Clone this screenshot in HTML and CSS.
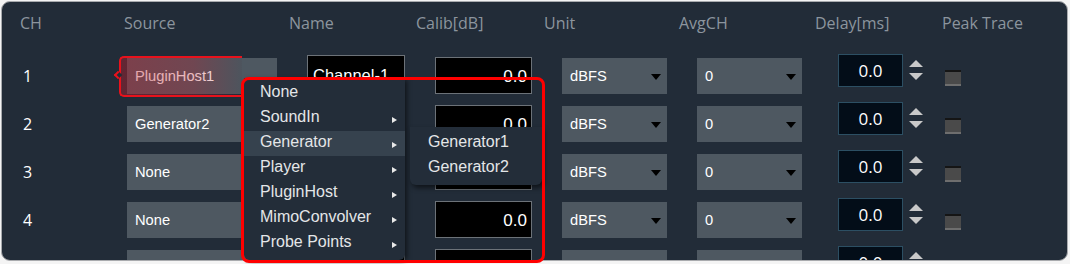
FILE: index.html
```html
<!DOCTYPE html>
<html>
<head>
<meta charset="utf-8">
<link rel="stylesheet" href="styles.css">
</head>
<body>
<div class="stage">
  <div class="panel">
    <div class="grid head">
      <div>CH</div><div>Source</div><div>Name</div><div>Calib[dB]</div><div>Unit</div><div>AvgCH</div><div>Delay[ms]</div><div>Peak Trace</div>
    </div>

    <div class="grid row">
      <div class="ch">1</div>
      <div class="combo src">PluginHost1</div>
      <div class="name">Channel-1</div>
      <div class="calib">0.0</div>
      <div class="combo sel">dBFS<span class="caret"></span></div>
      <div class="combo sel">0<span class="caret"></span></div>
      <div class="delay"><div class="dbox">0.0</div><div class="spin"><span class="up"></span><span class="down"></span></div></div>
      <div class="chk"></div>
    </div>

    <div class="grid row">
      <div class="ch">2</div>
      <div class="combo src">Generator2</div>
      <div class="name">Channel-2</div>
      <div class="calib">0.0</div>
      <div class="combo sel">dBFS<span class="caret"></span></div>
      <div class="combo sel">0<span class="caret"></span></div>
      <div class="delay"><div class="dbox">0.0</div><div class="spin"><span class="up"></span><span class="down"></span></div></div>
      <div class="chk"></div>
    </div>

    <div class="grid row">
      <div class="ch">3</div>
      <div class="combo src">None</div>
      <div class="name">Channel-3</div>
      <div class="calib">0.0</div>
      <div class="combo sel">dBFS<span class="caret"></span></div>
      <div class="combo sel">0<span class="caret"></span></div>
      <div class="delay"><div class="dbox">0.0</div><div class="spin"><span class="up"></span><span class="down"></span></div></div>
      <div class="chk"></div>
    </div>

    <div class="grid row">
      <div class="ch">4</div>
      <div class="combo src">None</div>
      <div class="name">Channel-4</div>
      <div class="calib">0.0</div>
      <div class="combo sel">dBFS<span class="caret"></span></div>
      <div class="combo sel">0<span class="caret"></span></div>
      <div class="delay"><div class="dbox">0.0</div><div class="spin"><span class="up"></span><span class="down"></span></div></div>
      <div class="chk"></div>
    </div>

    <div class="grid row">
      <div class="ch">5</div>
      <div class="combo src">None</div>
      <div class="name">Channel-5</div>
      <div class="calib">0.0</div>
      <div class="combo sel">dBFS<span class="caret"></span></div>
      <div class="combo sel">0<span class="caret"></span></div>
      <div class="delay"><div class="dbox">0.0</div><div class="spin"><span class="up"></span><span class="down"></span></div></div>
      <div class="chk"></div>
    </div>
  </div>

  <div class="callout"></div>

  <div class="menu">
    <div class="item">None</div>
    <div class="item">SoundIn<span class="arrow"></span></div>
    <div class="item active">Generator<span class="arrow"></span></div>
    <div class="item">Player<span class="arrow"></span></div>
    <div class="item">PluginHost<span class="arrow"></span></div>
    <div class="item">MimoConvolver<span class="arrow"></span></div>
    <div class="item">Probe Points<span class="arrow"></span></div>
  </div>
  <div class="submenu">
    <div class="item">Generator1</div>
    <div class="item">Generator2</div>
  </div>
  <div class="frame"></div>
</div>
</body>
</html>
```

FILE: styles.css
```css
html, body {
  margin: 0;
  padding: 0;
  background: #f4f4f4;
}

.stage {
  position: relative;
  width: 1070px;
  height: 264px;
  overflow: hidden;
}

.panel {
  box-sizing: border-box;
  margin: 1px 0 0 1px;
  width: 1067px;
  height: 260px;
  border: 1px solid #a9abae;
  border-radius: 9px;
  background: #222c38;
  overflow: hidden;
  padding-left: 18px;
}

.grid {
  display: grid;
  grid-template-columns: 104px 165px 127px 128px 135px 136px 127px 1fr;
}

.head {
  height: 50px;
  padding-top: 10px;
  box-sizing: border-box;
  font-family: "Open Sans", "Noto Sans", sans-serif;
  font-size: 16px;
  line-height: 22px;
  color: #8c959e;
}

.row {
  height: 48px;
  align-items: start;
  font-family: "Liberation Sans", Arial, sans-serif;
  color: #ffffff;
}

.ch {
  padding-left: 3px;
  height: 48px;
  line-height: 48px;
  font-family: "Open Sans", "Noto Sans", sans-serif;
  font-size: 16px;
}

.combo {
  box-sizing: border-box;
  margin-top: 6px;
  height: 36px;
  background: #4e5861;
  display: flex;
  align-items: center;
  padding-left: 8px;
  font-size: 14.7px;
}

.src {
  margin-left: 3px;
  width: 150px;
}

.sel {
  margin-left: 18px;
  width: 105px;
  justify-content: space-between;
  padding-right: 6px;
}

.caret {
  width: 0;
  height: 0;
  border-left: 5px solid transparent;
  border-right: 5px solid transparent;
  border-top: 6px solid #000000;
  margin-top: 1px;
}

.name {
  box-sizing: border-box;
  margin: 3px 0 0 18px;
  width: 98px;
  height: 36px;
  background: #000000;
  border: 1px solid #6c7278;
  padding-left: 5px;
  font-size: 16.5px;
  line-height: 38px;
  white-space: nowrap;
  overflow: hidden;
}

.calib {
  box-sizing: border-box;
  margin: 5px 0 0 19px;
  width: 97px;
  height: 37px;
  background: #000000;
  border: 1px solid #6c7278;
  padding-right: 4px;
  text-align: right;
  font-size: 17px;
  line-height: 37px;
}

.delay {
  display: flex;
  margin: 2px 0 0 23px;
}

.dbox {
  box-sizing: border-box;
  width: 65px;
  height: 33px;
  background: #030d18;
  border: 1px solid #2c4f63;
  text-align: center;
  font-family: "Open Sans", "Noto Sans", sans-serif;
  font-size: 17px;
  line-height: 31px;
}

.spin {
  display: flex;
  flex-direction: column;
  margin-left: 6px;
  padding-top: 6px;
  gap: 6px;
}

.up, .down {
  display: block;
  width: 0;
  height: 0;
  border-left: 7px solid transparent;
  border-right: 7px solid transparent;
}

.up {
  border-bottom: 7px solid #c9c9c9;
}

.down {
  border-top: 7px solid #c9c9c9;
}

.chk {
  box-sizing: border-box;
  margin: 18px 0 0 3px;
  width: 16px;
  height: 16px;
  background: #4a4a4a;
  border-top: 2px solid #151515;
  border-bottom: 2px solid #6e6e6e;
}

.callout {
  position: absolute;
  left: 119px;
  top: 56px;
  width: 123px;
  height: 41px;
  box-sizing: border-box;
  border: 2px solid #e8121c;
  border-right: none;
  border-radius: 5px 0 0 5px;
  background: linear-gradient(to right, rgba(190, 30, 45, 0.42), rgba(190, 30, 45, 0.3) 60%, rgba(60, 20, 30, 0.05));
}

.callout::before {
  content: "";
  position: absolute;
  left: -6px;
  top: 14px;
  width: 6px;
  height: 6px;
  box-sizing: border-box;
  border-left: 2px solid #e8121c;
  border-bottom: 2px solid #e8121c;
  background: #222c38;
  transform: rotate(45deg);
}

.menu {
  position: absolute;
  left: 244px;
  top: 78px;
  width: 161px;
  height: 182px;
  box-sizing: border-box;
  padding-top: 3px;
  background: #232d39;
  border-radius: 0 0 6px 6px;
  box-shadow: 2px 2px 5px rgba(0, 0, 0, 0.55);
  font-family: "Liberation Sans", Arial, sans-serif;
  font-size: 16px;
  color: #e4e6e8;
}

.item {
  box-sizing: border-box;
  height: 25px;
  display: flex;
  align-items: center;
  justify-content: space-between;
  padding: 0 8px 3px 16px;
}

.item.active {
  background: #36424e;
}

.arrow {
  width: 0;
  height: 0;
  border-top: 3.5px solid transparent;
  border-bottom: 3.5px solid transparent;
  border-left: 5px solid #e8e8e8;
  margin-top: 5px;
}

.submenu {
  position: absolute;
  left: 410px;
  top: 127px;
  width: 132px;
  height: 58px;
  box-sizing: border-box;
  padding-top: 4px;
  background: #232d39;
  border-radius: 0 0 6px 6px;
  box-shadow: 2px 3px 5px rgba(0, 0, 0, 0.55);
  font-family: "Liberation Sans", Arial, sans-serif;
  font-size: 16px;
  color: #e4e6e8;
}

.submenu .item {
  padding-left: 18px;
}

.frame {
  position: absolute;
  left: 241px;
  top: 77px;
  width: 304px;
  height: 186px;
  box-sizing: border-box;
  border: 3px solid #ff0000;
  border-radius: 8px;
}
```
